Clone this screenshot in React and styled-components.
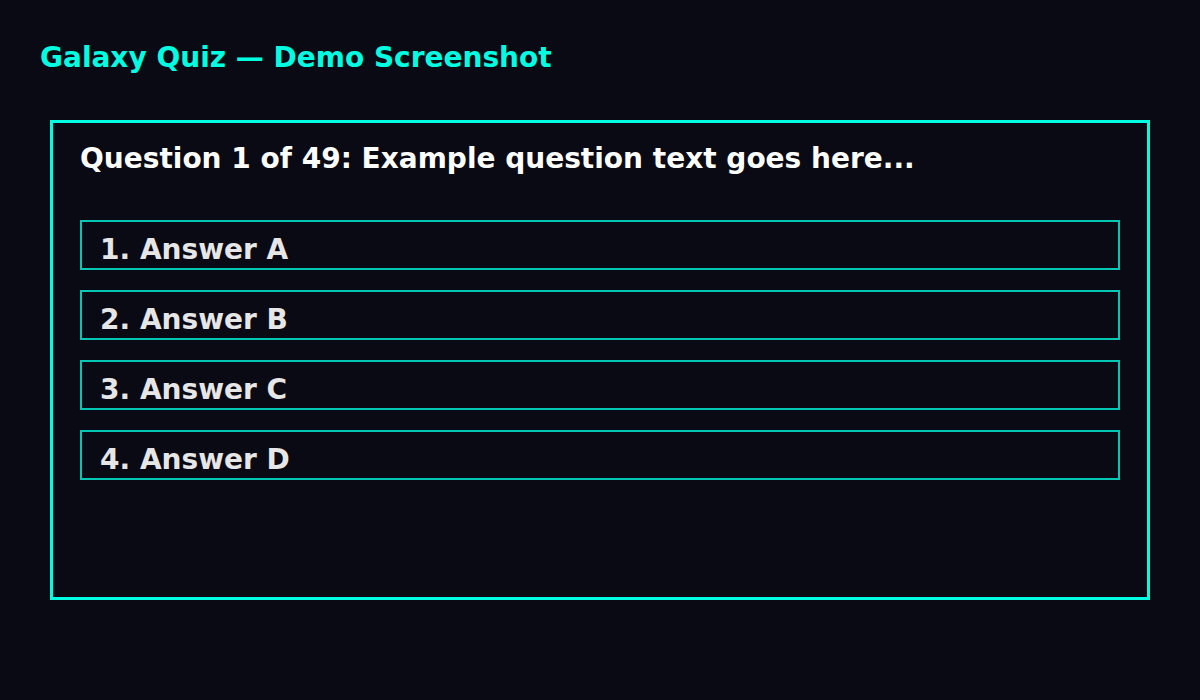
import React from "react";
import styled, { createGlobalStyle } from "styled-components";

const answers = ["Answer A", "Answer B", "Answer C", "Answer D"];

function App() {
  return (
    <>
      <GlobalStyle />
      <Page>
        <Title>Galaxy Quiz — Demo Screenshot</Title>
        <QuizBox>
          <Question>Question 1 of 49: Example question text goes here...</Question>
          <AnswerList>
            {answers.map((a, i) => (
              <AnswerRow key={a}>
                {i + 1}. {a}
              </AnswerRow>
            ))}
          </AnswerList>
        </QuizBox>
      </Page>
    </>
  );
}

export default App;

const GlobalStyle = createGlobalStyle`
  html, body {
    margin: 0;
    padding: 0;
    background: #0a0a14;
  }
  body {
    font-family: "DejaVu Sans", "Liberation Sans", sans-serif;
  }
`;

const Page = styled.div`
  width: 1200px;
  height: 700px;
  box-sizing: border-box;
  padding: 40px 50px 0 50px;
  background: #0a0a14;
`;

const Title = styled.div`
  margin-left: -10px;
  font-size: 28px;
  font-weight: bold;
  line-height: 36px;
  color: #00ffe0;
`;

const QuizBox = styled.div`
  margin-top: 44px;
  width: 1100px;
  height: 480px;
  box-sizing: border-box;
  border: 3px solid #00ffe0;
  padding: 18px 27px;
`;

const Question = styled.div`
  font-size: 28px;
  font-weight: bold;
  line-height: 36px;
  color: #ffffff;
`;

const AnswerList = styled.div`
  margin-top: 43px;
  display: flex;
  flex-direction: column;
  gap: 20px;
`;

const AnswerRow = styled.div`
  height: 50px;
  box-sizing: border-box;
  border: 2px solid #00c8b4;
  padding: 10px 18px 0;
  font-size: 28px;
  font-weight: bold;
  line-height: 36px;
  color: #e6e6e6;
`;
